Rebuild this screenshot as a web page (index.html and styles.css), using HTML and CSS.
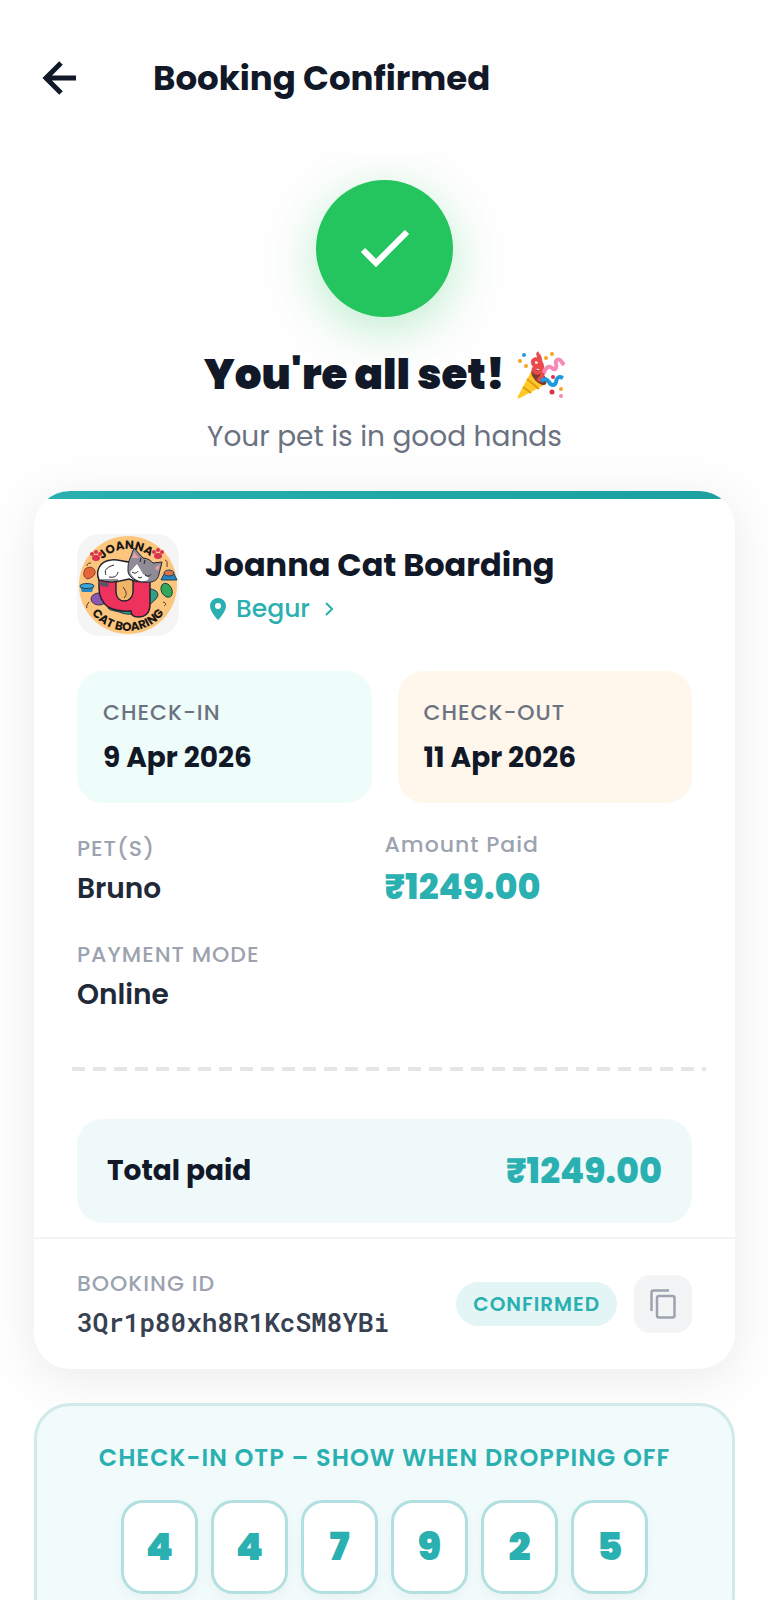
FILE: index.html
```
<!DOCTYPE html>
<html lang="en">
<head>
  <meta charset="UTF-8">
  <meta name="viewport" content="width=device-width, initial-scale=1.0">
  <title>Booking Confirmed</title>
  <link rel="stylesheet" href="styles.css">
</head>
<body>
  <header class="topbar">
    <button class="back-btn" type="button" aria-label="Go back">
      <svg viewBox="0 0 34 34" width="34" height="34" fill="none" stroke="currentColor" stroke-width="5">
        <path d="M34 17H4M19 2L4 17l15 15"/>
      </svg>
    </button>
    <h1>Booking Confirmed</h1>
  </header>

  <main>
    <!-- Success message -->
    <section class="success">
      <div class="success-icon">
        <svg viewBox="0 0 50 38" width="50" height="38" fill="none" stroke="#fff" stroke-width="6">
          <path d="M3 20l13 13L47 2"/>
        </svg>
      </div>
      <h2>You're all set!
        <svg class="party" viewBox="0 0 48 48" width="48" height="48" role="img" aria-label="Party popper">
          <path d="M15 19L1 45c-1 2 0 3 2 2l26-14z" fill="#ffc928"/>
          <path d="M10 28l12 10M6 36l8 6" stroke="#e49a13" stroke-width="2" fill="none"/>
          <ellipse cx="22" cy="26" rx="5" ry="10" transform="rotate(-43 22 26)" fill="#7b3d31"/>
          <path d="M21 30c5-5 7-9 3-13-5-3-10 1-6 4 5 3 9-4 6-9-3-6-9-4-8 0 1 5 9 3 7-4-1-4-3-5-1-6" fill="none" stroke="#ea4a4a" stroke-width="4"/>
          <path d="M27 22c1-5 5-8 8-5s5 0 4-4 2-6 5-3l3 4" fill="none" stroke="#f48ab5" stroke-width="4"/>
          <path d="M24 30c4-3 6-2 8 1 2 4 6 4 7 0 1-5 3-6 7-4" fill="none" stroke="#1e9be0" stroke-width="4"/>
          <g fill="#f5a623">
            <circle cx="3" cy="10" r="2"/><circle cx="9" cy="15" r="2"/><circle cx="29" cy="7" r="2"/><circle cx="35" cy="3" r="2"/><circle cx="44" cy="38" r="2"/>
          </g>
          <circle cx="7" cy="4" r="2" fill="#1e9be0"/>
          <circle cx="35" cy="41" r="2.500" fill="#d9324a"/>
          <circle cx="36" cy="26" r="2" fill="#d9324a"/>
          <circle cx="44" cy="45" r="2" fill="#f48ab5"/>
        </svg>
      </h2>
      <p>Your pet is in good hands</p>
    </section>

    <!-- Booking ticket -->
    <section class="ticket">
      <div class="ticket-bar"></div>
      <div class="ticket-body">
        <div class="provider">
          <svg class="provider-logo" viewBox="0 0 102 102" width="102" height="102" role="img" aria-label="Joanna Cat Boaring logo">
            <defs>
              <path id="arcTop" d="M15 51a36 36 0 0 1 72 0"/>
              <path id="arcBottom" d="M5 51a46 46 0 0 0 92 0"/>
            </defs>
            <rect width="102" height="102" rx="22" fill="#f5f5f5"/>
            <circle cx="51" cy="51" r="49" fill="#fdc67e"/>
            <!-- bowls and toys -->
            <path d="M31 74c10-5 15-2 21-9s18-14 27-8c6 6-4 10-8 16s-18 9-26 6-12-2-14-5z" fill="#2fa184" stroke="#235" stroke-width="1"/>
            <ellipse cx="22" cy="65" rx="8" ry="6" fill="#8a58ad" stroke="#435" stroke-width="1"/>
            <path d="M3 52h14l-2 6H5z" fill="#2684c0"/><ellipse cx="10" cy="52" rx="7" ry="2.500" fill="#3aa7d5" stroke="#245" stroke-width="1"/>
            <path d="M87 40h10l3 6H84z" fill="#2684c0" stroke="#245" stroke-width="1"/><ellipse cx="92" cy="39" rx="5" ry="3" fill="#da724c" stroke="#245" stroke-width="1"/>
            <path d="M85 51c3-4 9 0 10 5s-1 8-5 7-8-7-5-12z" fill="#36a65a" stroke="#143" stroke-width="1"/>
            <path d="M8 35c4-3 9-2 10 2s-3 7-8 8c-4-3-4-5-2-10z" fill="#e56536" stroke="#843" stroke-width="1"/>
            <path d="M14 29c-4 0-4 2-4 3M12 68c-2 3-3 4-2 6M88 26c3 1 2 4 2 7M86 68c4 1 3 3 1 4" fill="none" stroke="#4a3524" stroke-width="1"/>
            <g fill="#d93451">
              <ellipse cx="19" cy="24" rx="4" ry="3"/><circle cx="15" cy="20" r="2"/><circle cx="19" cy="18" r="2"/><circle cx="23" cy="20" r="2"/>
              <ellipse cx="81" cy="22" rx="4" ry="3"/><circle cx="77" cy="18" r="2"/><circle cx="81" cy="16" r="2"/><circle cx="85" cy="18" r="2"/>
            </g>
            <!-- red letter-shaped bed -->
            <path d="M22 45h17v13q1 9 8 9 8 0 9-9V45h17v27q-1 11-12 11-7 0-7-6-14 1-23-4-9-7-9-19z" fill="#ee315d" stroke="#23252e" stroke-width="1.500"/>
            <path d="M40 44v14q1 8 7 8 7 0 8-8V44z" fill="#f2b568"/>
            <path d="M46 53c4 5 4 8 1 11" fill="none" stroke="#4a3524" stroke-width="1"/>
            <!-- sleeping cat -->
            <path d="M22 46c-4-9 1-19 12-20 8-1 11 2 19 2l24 6c5 6 3 11-5 13-8 3-15 0-20-2-8 2-20 5-30 1z" fill="#fff" stroke="#23252e" stroke-width="1.500"/>
            <path d="M52 27l5-13 9 10c5 0 8 3 10 5l9-1-3 12c-1 7-7 9-14 8-9 0-17-5-17-11 0-4 0-7 1-10z" fill="#8f8c98" stroke="#23252e" stroke-width="1"/>
            <path d="M55 24l2-6 5 6zM78 34l5-4-2 7z" fill="#ee9ca6"/>
            <path d="M60 30l-7 8q3 7 10 9 7 1 9-3l-6-4z" fill="#fff"/>
            <path d="M55 38c3 2 5 1 6-1M68 41c3 2 5 1 6-1M37 31c-8 2-10 6-8 10M32 43c6 1 8-1 9-5M24 46h17M61 43l2 1 2-1M64 24l-1 4M68 26l-1 4" fill="none" stroke="#23252e" stroke-width="1"/>
            <path d="M22 48l9 1 1 4-8-1z" fill="#565665"/>
            <text class="logo-text"><textPath href="#arcTop" startOffset="48%" text-anchor="middle">JOANNA</textPath></text>
            <text class="logo-text"><textPath href="#arcBottom" startOffset="50%" text-anchor="middle">CAT BOARING</textPath></text>
          </svg>
          <div class="provider-info">
            <h3>Joanna Cat Boarding</h3>
            <a class="location" href="#">
              <svg viewBox="0 0 16 22" width="16" height="22" fill="currentColor">
                <path fill-rule="evenodd" d="M8 0a8 8 0 0 0-8 8c0 6 8 14 8 14s8-8 8-14a8 8 0 0 0-8-8zm0 5a3 3 0 1 1 0 6 3 3 0 0 1 0-6z"/>
              </svg>
              <span>Begur</span>
              <svg class="chevron" viewBox="0 0 8 14" width="8" height="14" fill="none" stroke="currentColor" stroke-width="2">
                <path d="M1 1l6 6-6 6"/>
              </svg>
            </a>
          </div>
        </div>

        <div class="dates">
          <div class="date check-in">
            <span class="label">CHECK-IN</span>
            <strong>9 Apr 2026</strong>
          </div>
          <div class="date check-out">
            <span class="label">CHECK-OUT</span>
            <strong>11 Apr 2026</strong>
          </div>
        </div>

        <div class="details">
          <div class="detail">
            <span class="label">PET(S)</span>
            <span class="value">Bruno</span>
          </div>
          <div class="detail-amount">
            <span class="label">Amount Paid</span>
            <span class="amount">₹1249.00</span>
          </div>
          <div class="detail">
            <span class="label">PAYMENT MODE</span>
            <span class="value">Online</span>
          </div>
        </div>

        <div class="dashes"></div>

        <div class="total">
          <span>Total paid</span>
          <span class="amount">₹1249.00</span>
        </div>
      </div>

      <footer class="ticket-footer">
        <div class="booking-id">
          <span class="label">BOOKING ID</span>
          <code>3Qr1p80xh8R1KcSM8YBi</code>
        </div>
        <span class="badge">CONFIRMED</span>
        <button class="copy-btn" type="button" aria-label="Copy booking ID">
          <svg viewBox="0 0 26 30" width="26" height="30" fill="none" stroke="currentColor" stroke-width="2.500">
            <path d="M1.500 22V3.500q0-2 2-2H19"/>
            <rect x="7" y="7" width="17.500" height="21.500" rx="2"/>
          </svg>
        </button>
      </footer>
    </section>

    <!-- OTP -->
    <section class="otp">
      <h3>CHECK-IN OTP – SHOW WHEN DROPPING OFF</h3>
      <div class="otp-digits">
        <span>4</span>
        <span>4</span>
        <span>7</span>
        <span>9</span>
        <span>2</span>
        <span>5</span>
      </div>
    </section>
  </main>
</body>
</html>
```
FILE: styles.css
```
* {
  box-sizing: border-box;
  margin: 0;
  padding: 0;
}

body {
  height: 100vh;
  display: flex;
  flex-direction: column;
  background-color: #fefefe;
  color: #111827;
  font-family: Poppins, Inter, sans-serif;
  font-feature-settings: "cv11"; /* single-storey a */
}

button {
  border: none;
  background: none;
  cursor: pointer;
}

svg {
  display: block;
  flex-shrink: 0;
}

/* Header */
.topbar {
  display: flex;
  align-items: center;
  gap: 77px;
  padding: 52px 42px;
}

.back-btn {
  color: #111827;
}

.topbar h1 {
  font-size: 34px;
  line-height: 52px;
  font-weight: 700;
}

main {
  flex: 1;
  min-height: 0;
  overflow-y: auto;
  scrollbar-width: none;
  padding: 24px 34px 34px;
}

/* Success message */
.success {
  text-align: center;
}

.success-icon {
  display: flex;
  align-items: center;
  justify-content: center;
  width: 137px;
  height: 137px;
  margin: 0 auto 24px;
  border-radius: 50%;
  background-color: #24c55e;
  box-shadow: 0 12px 48px rgba(36, 197, 94, 0.3);
}

.success h2 {
  display: flex;
  align-items: center;
  justify-content: center;
  gap: 12px;
  font-size: 42px;
  line-height: 68px;
  font-weight: 900;
}

.success p {
  margin-top: 6px;
  font-size: 28px;
  line-height: 44px;
  font-weight: 400;
  color: #6b7280;
}

/* Ticket */
.ticket {
  margin-top: 32px;
  border-radius: 36px;
  background-color: #fff;
  box-shadow: 0 8px 48px rgba(0, 0, 0, 0.08);
  overflow: hidden;
}

.ticket-bar {
  height: 8px;
  background: linear-gradient(to right, #2ab0b0, #1b9fa0);
}

.ticket-body {
  padding: 35px 43px 14px;
}

.provider {
  display: flex;
  align-items: center;
  gap: 26px;
}

.logo-text {
  font-size: 12px;
  font-weight: 700;
  fill: #1c1714;
}

.provider-info h3 {
  font-size: 32px;
  line-height: 48px;
  font-weight: 700;
}

.location {
  display: flex;
  align-items: center;
  gap: 10px;
  padding-left: 5px;
  font-size: 25px;
  line-height: 40px;
  font-weight: 500;
  color: #2ab0b0;
  text-decoration: none;
}

.chevron {
  margin-left: 5px;
}

.label {
  display: block;
  font-size: 22px;
  line-height: 32px;
  font-weight: 500;
  letter-spacing: 1px;
  color: #9ca3af;
}

.dates {
  display: grid;
  grid-template-columns: 1fr 1fr;
  gap: 26px;
  margin-top: 35px;
}

.date {
  padding: 26px;
  border-radius: 26px;
}

.date .label {
  color: #6b7280;
}

.date strong {
  display: block;
  margin-top: 10px;
  font-size: 28px;
  line-height: 38px;
  font-weight: 700;
}

.check-in {
  background-color: #effdfa;
}

.check-out {
  background-color: #fff6ec;
}

.details {
  display: grid;
  grid-template-columns: 1fr 1fr;
  row-gap: 22px;
  margin-top: 26px;
}

.detail {
  padding-top: 4px;
}

.value {
  display: block;
  margin-top: 4px;
  font-size: 28px;
  line-height: 40px;
  font-weight: 600;
  color: #1f2937;
}

.amount {
  display: block;
  font-size: 35px;
  line-height: 52px;
  font-weight: 800;
  color: #2ab0b0;
}

.dashes {
  height: 4px;
  margin: 52px -14px 48px -5px;
  background: repeating-linear-gradient(to right, #e5e5e5 0 13px, transparent 13px 21px);
}

.total {
  display: flex;
  align-items: center;
  justify-content: space-between;
  padding: 26px 30px;
  border-radius: 26px;
  background-color: #eff9fa;
  font-size: 28px;
  font-weight: 700;
}

.ticket-footer {
  display: flex;
  align-items: center;
  gap: 17px;
  padding: 29px 43px;
  border-top: 2px solid #f3f4f6;
}

.booking-id {
  flex: 1;
}

.booking-id code {
  display: block;
  margin-top: 4px;
  font-family: "Roboto Mono", "Liberation Mono", monospace;
  font-size: 26px;
  line-height: 36px;
  font-weight: 600;
  color: #374151;
}

.badge {
  padding: 7px 17px;
  border-radius: 22px;
  background-color: #e4f5f5;
  color: #2ab0b0;
  font-size: 20px;
  line-height: 30px;
  font-weight: 600;
  letter-spacing: 1px;
}

.copy-btn {
  display: flex;
  align-items: center;
  justify-content: center;
  width: 58px;
  height: 58px;
  border-radius: 16px;
  background-color: #f3f4f6;
  color: #9ca3af;
}

/* OTP */
.otp {
  margin-top: 34px;
  padding: 34px 26px;
  border: 3px solid #cfeae9;
  border-radius: 36px;
  background-color: #f2fbfb;
  text-align: center;
}

.otp h3 {
  font-size: 24px;
  line-height: 36px;
  font-weight: 600;
  letter-spacing: 1px;
  color: #2ab0b0;
}

.otp-digits {
  display: flex;
  justify-content: center;
  gap: 13px;
  margin-top: 24px;
}

.otp-digits span {
  width: 77px;
  padding: 17px 0;
  border: 3px solid #b2dfdf;
  border-radius: 22px;
  background-color: #fff;
  box-shadow: 0 4px 12px rgba(0, 0, 0, 0.04);
  color: #2ab0b0;
  font-size: 39px;
  line-height: 54px;
  font-weight: 900;
}
```
